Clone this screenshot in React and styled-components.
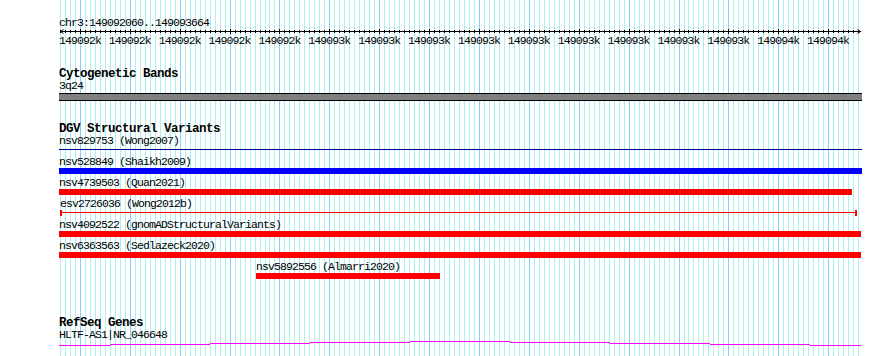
import React from "react";
import styled, { createGlobalStyle } from "styled-components";

const Global = createGlobalStyle`
  html, body { margin: 0; padding: 0; background: #ffffff; }
  #root { width: 890px; height: 356px; }
`;

const START_X = 59;
const TRACK_W = 803;
const BP_PX = 4.988; // px per 10 bp

const Page = styled.div`
  position: relative;
  width: 890px;
  height: 356px;
  overflow: hidden;
  background: #ffffff;
  font-family: "Liberation Mono", "DejaVu Sans Mono", monospace;
  color: #000000;
`;

const GridLayer = styled.svg`
  position: absolute;
  left: 0;
  top: 0;
  z-index: 0;
  display: block;
`;

const Content = styled.div`
  position: relative;
  z-index: 1;
  width: ${TRACK_W}px;
  margin-left: ${START_X}px;
  padding-top: 16px;
`;

const PlainText = styled.div`
  font-size: 11.5px;
  letter-spacing: -0.9px;
  line-height: ${(p) => p.$lh || 13}px;
  height: ${(p) => p.$lh || 13}px;
  white-space: nowrap;
`;

const RulerSvg = styled.svg`
  display: block;
  width: ${TRACK_W}px;
  height: 6px;
`;

const TickRow = styled.div`
  display: flex;
  margin-left: -3.94px;
  height: 11px;
`;

const TickLabel = styled.div`
  flex: 0 0 49.88px;
  text-align: center;
  font-size: 11.5px;
  letter-spacing: -0.9px;
  line-height: 11px;
  white-space: nowrap;
`;

const Track = styled.section`
  margin-top: ${(p) => p.$gap}px;
`;

const TrackTitle = styled.div`
  font-size: 12.5px;
  font-weight: bold;
  letter-spacing: -0.5px;
  line-height: 11px;
  height: 11px;
  white-space: nowrap;
`;

const Band = styled.div`
  margin-top: 2px;
  height: 6px;
  background: #808080;
  border-top: 1px solid #000;
  border-bottom: 1px solid #000;
`;

const FeatureList = styled.div`
  display: flex;
  flex-direction: column;
`;

const FeatureRow = styled.div`
  height: 21px;
  display: flex;
  flex-direction: column;
`;

const FeatureLabel = styled.div`
  font-size: 11.5px;
  letter-spacing: -0.9px;
  line-height: 12px;
  height: 12px;
  white-space: nowrap;
`;

const BoxGlyph = styled.div`
  height: 6px;
  background: ${(p) => p.$color};
`;

const LineGlyph = styled.div`
  height: 6px;
  display: flex;
  align-items: flex-start;
`;

const Cap = styled.div`
  flex: 0 0 2px;
  height: 6px;
  background: ${(p) => p.$color};
`;

const Stem = styled.div`
  flex: 1 1 auto;
  height: 1px;
  margin-top: 2px;
  background: ${(p) => p.$color};
`;

const GeneSvg = styled.svg`
  display: block;
  margin-top: -1px;
  width: ${TRACK_W}px;
  height: 8px;
`;

const features = [
  { name: "nsv829753 (Wong2007)", x0: 59, x1: 862, kind: "line", color: "#00008b", caps: false },
  { name: "nsv528849 (Shaikh2009)", x0: 59, x1: 862, kind: "box", color: "#0000ff" },
  { name: "nsv4739503 (Quan2021)", x0: 59, x1: 852, kind: "box", color: "#ff0000" },
  { name: "esv2726036 (Wong2012b)", x0: 60, x1: 857, kind: "line", color: "#ff0000", caps: true },
  { name: "nsv4092522 (gnomADStructuralVariants)", x0: 59, x1: 861, kind: "box", color: "#ff0000" },
  { name: "nsv6363563 (Sedlazeck2020)", x0: 59, x1: 861, kind: "box", color: "#ff0000" },
  { name: "nsv5892556 (Almarri2020)", x0: 256, x1: 440, kind: "box", color: "#ff0000" },
];

const tickLabels = [
  "149092k", "149092k", "149092k", "149092k", "149092k",
  "149093k", "149093k", "149093k", "149093k", "149093k",
  "149093k", "149093k", "149093k", "149093k",
  "149094k", "149094k",
];

const geneSegments = [
  [59, 110, 345], [110, 210, 344], [210, 310, 343], [310, 410, 342],
  [410, 510, 341], [510, 610, 342], [610, 710, 343], [710, 810, 344],
  [810, 861, 345],
];

function Grid() {
  const lines = [];
  for (let n = 0; n <= 160; n++) {
    const x = Math.round(60 + n * BP_PX);
    const major = n % 10 === 4;
    lines.push(
      <rect key={n} x={x} y={0} width={1} height={356} fill={major ? "#87cefa" : "#afeeee"} />
    );
  }
  return (
    <GridLayer width="890" height="356" shapeRendering="crispEdges">
      {lines}
    </GridLayer>
  );
}

function Ruler() {
  const ticks = [];
  for (let n = 0; n <= 160; n++) {
    const x = Math.round(60 + n * BP_PX) - START_X;
    const major = n % 10 === 4;
    ticks.push(
      <rect key={n} x={x} y={major ? 0 : 1} width={1} height={major ? 5 : 3} fill="#000" />
    );
  }
  return (
    <RulerSvg viewBox={`0 0 ${TRACK_W} 6`}>
      <g shapeRendering="crispEdges">
        <rect x={1} y={2} width={801} height={1} fill="#000" />
        {ticks}
      </g>
      <path d="M4.5 0.5 L1.5 2.5 L4.5 4.5" stroke="#000" strokeWidth="1" fill="none" />
      <path d="M798.5 0.5 L801.5 2.5 L798.5 4.5" stroke="#000" strokeWidth="1" fill="none" />
    </RulerSvg>
  );
}

function Feature({ f }) {
  const style = { marginLeft: f.x0 - START_X, width: f.x1 - f.x0 };
  return (
    <FeatureRow>
      <FeatureLabel style={{ marginLeft: f.x0 - START_X }}>{f.name}</FeatureLabel>
      {f.kind === "box" ? (
        <BoxGlyph $color={f.color} style={style} />
      ) : (
        <LineGlyph style={style}>
          {f.caps && <Cap $color={f.color} />}
          <Stem $color={f.color} />
          {f.caps && <Cap $color={f.color} />}
        </LineGlyph>
      )}
    </FeatureRow>
  );
}

export default function App() {
  return (
    <>
      <Global />
      <Page>
        <Grid />
        <Content>
          <PlainText $lh={13}>chr3:149092060..149093664</PlainText>
          <Ruler />
          <TickRow>
            {tickLabels.map((t, i) => (
              <TickLabel key={i}>{t}</TickLabel>
            ))}
          </TickRow>

          <Track $gap={23}>
            <TrackTitle>Cytogenetic Bands</TrackTitle>
            <PlainText $lh={11}>3q24</PlainText>
            <Band />
          </Track>

          <Track $gap={23}>
            <TrackTitle>DGV Structural Variants</TrackTitle>
            <FeatureList>
              {features.map((f) => (
                <Feature key={f.name} f={f} />
              ))}
            </FeatureList>
          </Track>

          <Track $gap={36}>
            <TrackTitle>RefSeq Genes</TrackTitle>
            <PlainText $lh={11}>HLTF-AS1|NR_046648</PlainText>
            <GeneSvg viewBox={`0 0 ${TRACK_W} 8`} shapeRendering="crispEdges">
              {geneSegments.map(([a, b, y], i) => (
                <rect key={i} x={a - START_X} y={y - 339} width={b - a} height={1} fill="#ff00ff" />
              ))}
            </GeneSvg>
          </Track>
        </Content>
      </Page>
    </>
  );
}
